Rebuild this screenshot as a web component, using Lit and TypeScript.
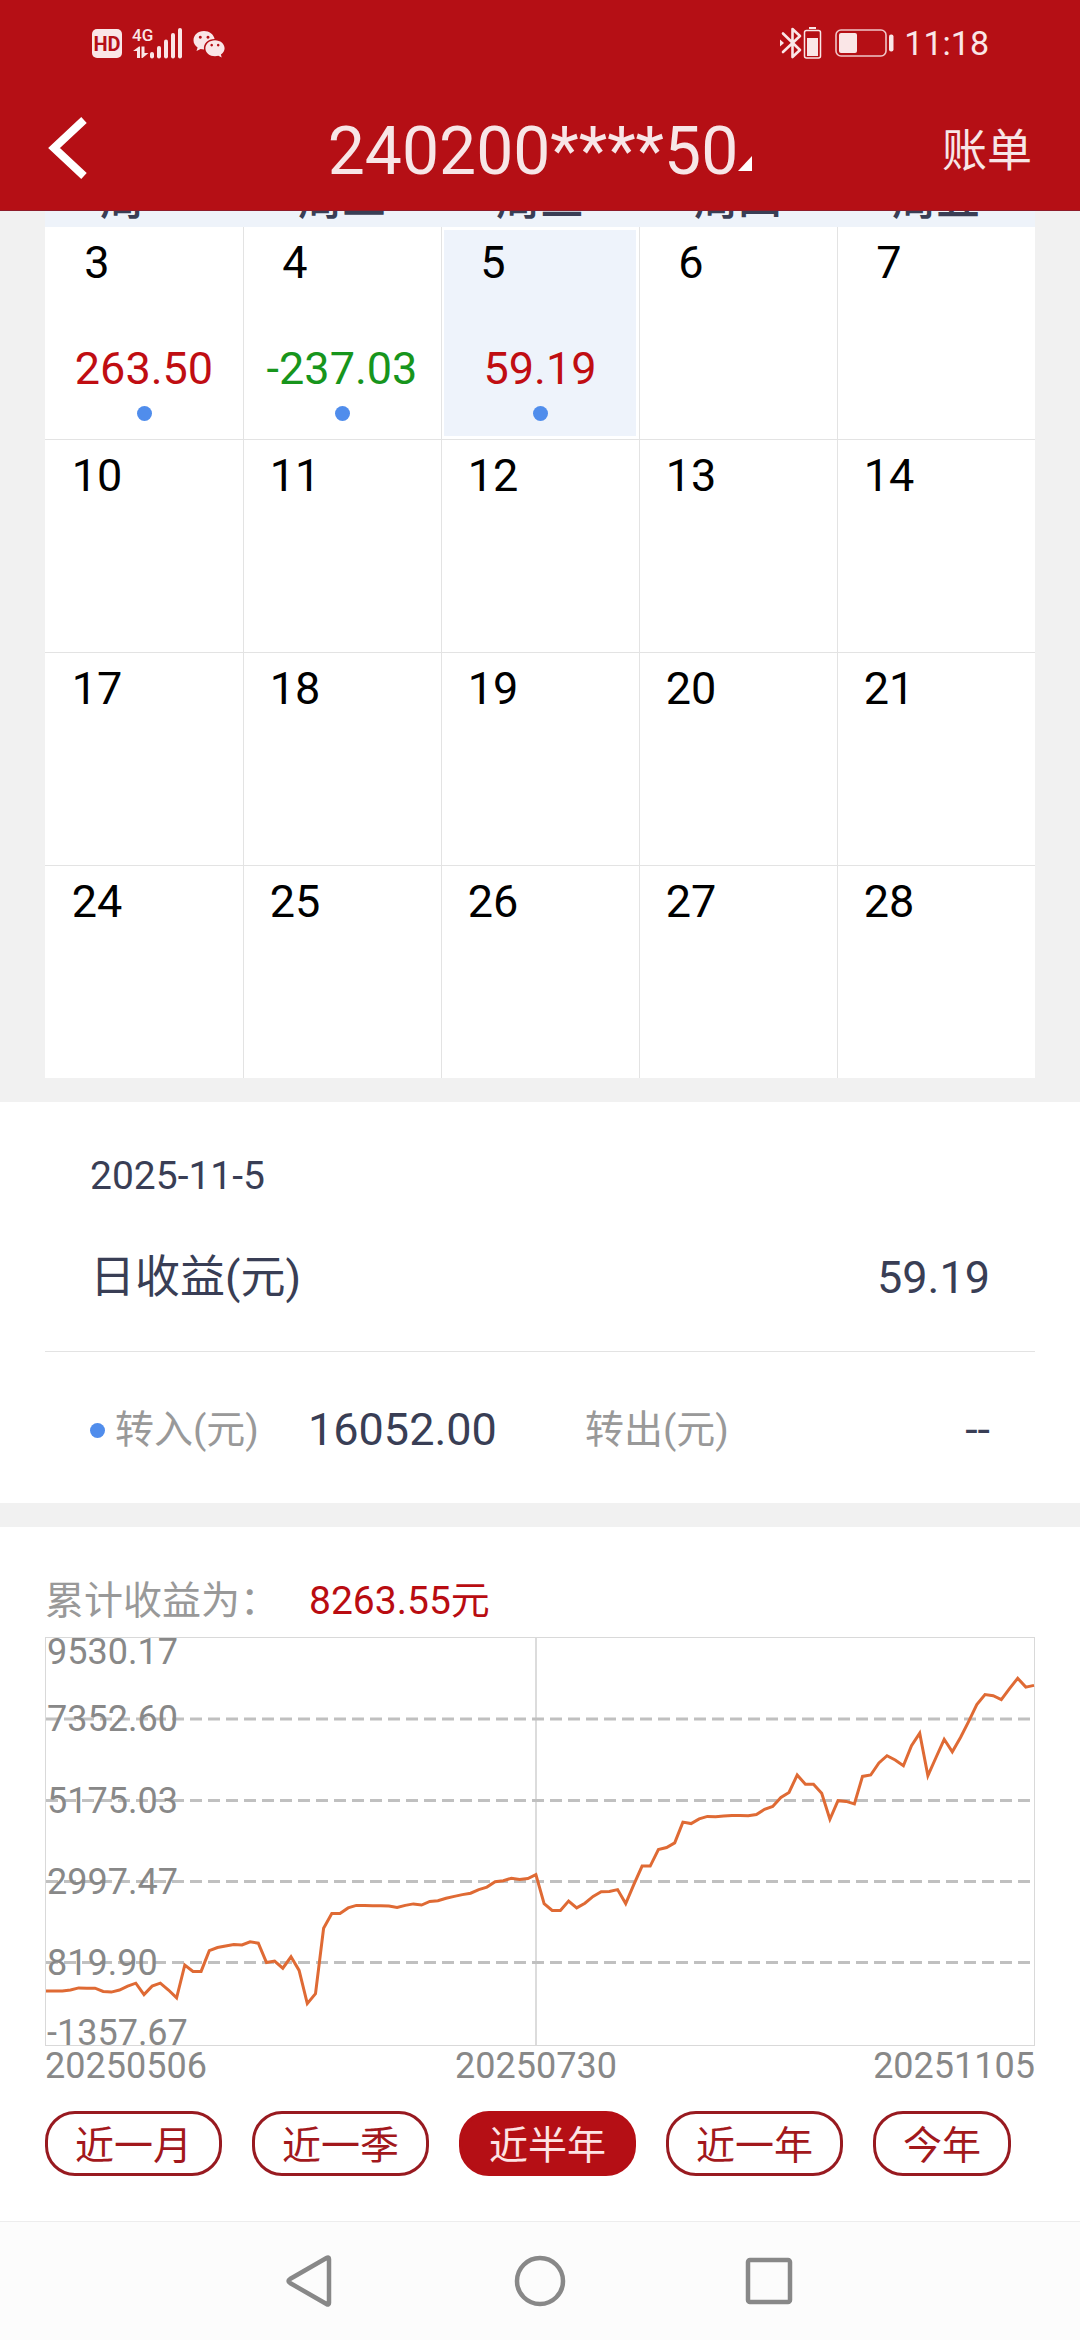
import { LitElement, html, svg, css, nothing } from "lit";
import { customElement, property, state } from "lit/decorators.js";
import { classMap } from "lit/directives/class-map.js";

interface Day {
  day: number;
  amount?: string;
}

const WEEKDAYS = ["周一", "周二", "周三", "周四", "周五"];

const WEEKS: Day[][] = [
  [
    { day: 3, amount: "263.50" },
    { day: 4, amount: "-237.03" },
    { day: 5, amount: "59.19" },
    { day: 6 },
    { day: 7 },
  ],
  [10, 11, 12, 13, 14].map((day) => ({ day })),
  [17, 18, 19, 20, 21].map((day) => ({ day })),
  [24, 25, 26, 27, 28].map((day) => ({ day })),
];

const RANGES = ["近一月", "近一季", "近半年", "近一年", "今年"];

/* Depth of each sample; 2.8 of these make one chart unit. */
const TREND = [
  1263, 1263, 1263, 1260, 1254, 1255, 1255, 1264, 1266, 1260, 1249, 1241, 1273,
  1249, 1241, 1260, 1282, 1190, 1208, 1208, 1150, 1141, 1137, 1133, 1134, 1125,
  1129, 1183, 1179, 1199, 1167, 1205, 1298, 1270, 1087, 1046, 1046, 1030, 1023,
  1023, 1024, 1024, 1025, 1029, 1023, 1019, 1022, 1012, 1010, 1003, 998, 993,
  989, 979, 972, 957, 954, 947, 951, 948, 937, 1018, 1037, 1037, 1011, 1030,
  1017, 998, 985, 984, 979, 1018, 964, 913, 913, 867, 861, 848, 790, 794, 781,
  774, 775, 773, 771, 771, 772, 769, 754, 746, 721, 707, 658, 684, 684, 709,
  782, 730, 732, 739, 662, 658, 624, 604, 616, 632, 576, 541, 660, 609, 558,
  593, 553, 508, 461, 433, 436, 447, 416, 387, 412, 407,
];

const SCALE = [
  { label: "9530.17", baseline: 27 },
  { label: "7352.60", baseline: 94, line: 82 },
  { label: "5175.03", baseline: 176, line: 163.5 },
  { label: "2997.47", baseline: 257, line: 244.5 },
  { label: "819.90", baseline: 338, line: 325.5 },
  { label: "-1357.67", baseline: 408 },
];

const DATES = [
  { label: "20250506", x: 0, anchor: "start" },
  { label: "20250730", x: 491, anchor: "middle" },
  { label: "20251105", x: 990, anchor: "end" },
];

@customElement("status-bar")
class StatusBar extends LitElement {
  static styles = css`
    :host {
      display: flex;
      justify-content: space-between;
      align-items: center;
      height: 85px;
      padding: 0 91px;
      color: #fae6e7;
      font-size: 34px;
      line-height: 40px;
    }
    .group {
      display: flex;
      align-items: center;
      gap: 11px;
    }
    .right {
      gap: 13px;
    }
    .clock {
      display: flex;
      align-items: center;
      gap: 10px;
    }
    svg {
      display: block;
      overflow: visible;
      fill: currentColor;
    }
    .hd {
      font: 700 20px Roboto, sans-serif;
      fill: #b50f15;
    }
    .net {
      font: 500 17px Roboto, sans-serif;
    }
    .line {
      fill: none;
      stroke: currentColor;
    }
  `;

  render() {
    return html`
      <div class="group">
        <svg width="31" height="32" viewBox="0 0 31 32" aria-label="HD">
          <rect x="1" y="2" width="30" height="29" rx="5" />
          <text class="hd" x="16" y="24" text-anchor="middle">HD</text>
        </svg>
        <svg width="49" height="32" viewBox="0 0 49 32" aria-label="4G">
          <text class="net" x="-1" y="14">4G</text>
          <path d="M0 24 L6 19.5 H7 V31 H4 V24 Z" />
          <path d="M8.500 19.500 H11.500 V26 H15.500 L9.500 31 H8.500 Z" />
          <rect x="17" y="25" width="4" height="6.500" rx="2" />
          <rect x="24" y="19" width="4" height="12.500" rx="2" />
          <rect x="31" y="12.500" width="4" height="19" rx="2" />
          <rect x="38" y="6" width="4" height="25.500" rx="2" />
          <rect x="45" y="1" width="4" height="30.500" rx="2" />
        </svg>
        <svg width="32" height="32" viewBox="0 0 32 32" aria-hidden="true">
          <path
            fill-rule="evenodd"
            d="M11 4 C4.800 4 0.500 8.200 0.500 13.200 C0.500 16.200 2 18.700 4.600 20.400 L3.500 24 L7.600 22 C8.700 22.300 9.800 22.400 11 22.400 C10.200 16.500 15 12 21.600 12 C20.600 7.200 16.200 4 11 4 Z M7.300 8.700 A1.500 1.500 0 1 1 7.290 8.700 Z M15 8.700 A1.500 1.500 0 1 1 14.990 8.700 Z"
          />
          <path
            fill-rule="evenodd"
            d="M22 13.200 C16.700 13.200 12.400 16.800 12.400 21.200 C12.400 25.700 16.600 29.200 22 29.200 C23.200 29.200 24.300 29 25.400 28.700 L28.700 30.500 L27.900 27.400 C30.200 25.900 31.600 23.700 31.600 21.200 C31.600 16.800 27.300 13.200 22 13.200 Z M18.700 16.800 A1.300 1.300 0 1 1 18.690 16.800 Z M25.200 16.800 A1.300 1.300 0 1 1 25.190 16.800 Z"
          />
        </svg>
      </div>
      <div class="group right">
        <svg width="43" height="34" viewBox="0 0 43 34" aria-hidden="true">
          <path
            class="line"
            stroke-width="2.600"
            stroke-linejoin="round"
            stroke-linecap="round"
            d="M4 7.500 L21 24 L13.500 31 V3 L21 10 L4 26"
          />
          <path d="M1 13.500 L5 17 L1 20.500 Z" />
          <rect x="30" y="1" width="7" height="2" />
          <rect class="line" x="25.500" y="4.500" width="16" height="27.500" rx="2" stroke-width="1.500" />
          <rect x="28" y="12" width="11" height="18" />
        </svg>
        <div class="clock">
          <svg width="59" height="30" viewBox="0 0 59 30" aria-hidden="true">
            <rect class="line" x="1" y="2" width="50" height="26" rx="5" stroke-width="1.600" opacity="0.850" />
            <rect x="4" y="5" width="18" height="20" rx="2" />
            <rect x="54" y="6.500" width="4.500" height="17" rx="2" />
          </svg>
          <span>11:18</span>
        </div>
      </div>
    `;
  }
}

@customElement("profit-calendar")
class ProfitCalendar extends LitElement {
  @state() private selected = 5;

  static styles = css`
    :host {
      display: block;
      margin: -60px 45px 24px;
    }
    table {
      width: 100%;
      table-layout: fixed;
      border-spacing: 0;
      background: #fff;
    }
    th {
      padding: 22px 0 0;
      background: #eef3fa;
      color: #393e55;
      font-size: 44px;
      line-height: 54px;
      font-weight: 500;
    }
    td {
      padding: 3px;
      border-bottom: 1px solid #e3e3e3;
    }
    td + td {
      padding-left: 2px;
      border-left: 1px solid #e3e3e3;
    }
    tr:last-child td {
      border-bottom: 0;
    }
    .day {
      display: flex;
      flex-direction: column;
      align-items: center;
      width: 100%;
      height: 206px;
      padding: 6px 0 0;
      border: 0;
      background: none;
      color: #000;
      font: inherit;
      font-size: 45px;
      line-height: 54px;
    }
    .picked {
      background: #eef3fb;
    }
    .number {
      align-self: flex-start;
      width: 98px;
    }
    .amount {
      margin-top: 52px;
      color: #c00d12;
    }
    .loss {
      color: #17951c;
    }
    .dot {
      width: 15px;
      height: 15px;
      margin-top: 10px;
      border-radius: 50%;
      background: #508dec;
    }
  `;

  private cell({ day, amount }: Day) {
    return html`<td>
      <button
        class=${classMap({ day: true, picked: day === this.selected })}
        aria-pressed=${day === this.selected}
        @click=${() => (this.selected = day)}
      >
        <span class="number">${day}</span>
        ${amount
          ? html`<span class=${classMap({ amount: true, loss: amount.startsWith("-") })}>${amount}</span>
              <span class="dot"></span>`
          : nothing}
      </button>
    </td>`;
  }

  render() {
    return html`
      <table>
        <thead>
          <tr>
            ${WEEKDAYS.map((name) => html`<th scope="col">${name}</th>`)}
          </tr>
        </thead>
        <tbody>
          ${WEEKS.map((week) => html`<tr>${week.map((day) => this.cell(day))}</tr>`)}
        </tbody>
      </table>
    `;
  }
}

@customElement("day-detail")
class DayDetail extends LitElement {
  static styles = css`
    :host {
      display: block;
      margin-bottom: 24px;
      padding: 0 45px;
      background: #fff;
      color: #393e55;
      font-size: 45px;
      line-height: 54px;
    }
    .summary {
      padding: 50px 45px 46px;
      border-bottom: 1px solid #e3e3e3;
    }
    .date {
      font-size: 39px;
      line-height: 48px;
    }
    .income {
      display: flex;
      justify-content: space-between;
      margin-top: 51px;
    }
    .flows {
      display: grid;
      grid-template-columns: 218px 277px 1fr auto;
      padding: 51px 45px 46px;
    }
    .label {
      display: flex;
      align-items: center;
      gap: 10px;
      color: #999;
      font-size: 39px;
    }
    .dot {
      width: 15px;
      height: 15px;
      border-radius: 50%;
      background: #508dec;
    }
  `;

  render() {
    return html`
      <div class="summary">
        <div class="date">2025-11-5</div>
        <div class="income"><span>日收益(元)</span><span>59.19</span></div>
      </div>
      <div class="flows">
        <span class="label"><span class="dot"></span>转入(元)</span>
        <span>16052.00</span>
        <span class="label">转出(元)</span>
        <span>--</span>
      </div>
    `;
  }
}

@customElement("profit-chart")
class ProfitChart extends LitElement {
  @property({ type: Array }) trend: number[] = TREND;

  static styles = css`
    :host {
      display: block;
    }
    svg {
      display: block;
      width: 100%;
      overflow: visible;
    }
    .frame {
      fill: none;
      stroke: #d9d9d9;
    }
    .middle {
      stroke: #dcdcdc;
      stroke-width: 2;
    }
    .guide {
      stroke: #c0c0c0;
      stroke-width: 3;
      stroke-dasharray: 12 6;
    }
    .curve {
      fill: none;
      stroke: #df6a34;
      stroke-width: 3;
      stroke-linejoin: miter;
    }
    text {
      fill: #888;
      font: 36px Roboto, sans-serif;
    }
  `;

  render() {
    const step = 988 / (this.trend.length - 1);
    const points = this.trend
      .map((depth, i) => `${(1 + i * step).toFixed(1)},${(depth / 2.8 - 97).toFixed(1)}`)
      .join(" ");
    return html`
      <svg viewBox="0 0 990 449" role="img" aria-label="累计收益">
        <rect class="frame" x="0.500" y="0.500" width="989" height="408" />
        <line class="middle" x1="491" y1="1" x2="491" y2="408" />
        ${SCALE.map(
          ({ line }) => (line ? svg`<line class="guide" x1="1" y1=${line} x2="989" y2=${line} />` : nothing),
        )}
        ${SCALE.map(({ label, baseline }) => svg`<text x="2" y=${baseline}>${label}</text>`)}
        ${DATES.map(
          ({ label, x, anchor }) => svg`<text x=${x} y="441" text-anchor=${anchor}>${label}</text>`,
        )}
        <polyline class="curve" points=${points} />
      </svg>
    `;
  }
}

@customElement("app-root")
class AppRoot extends LitElement {
  @state() private range = "近半年";

  static styles = css`
    :host {
      display: flex;
      flex-direction: column;
      min-height: 100vh;
      background: #f1f1f1;
      font-family: Roboto, "Noto Sans CJK SC", sans-serif;
      overflow: hidden;
    }
    button {
      margin: 0;
      padding: 0;
      border: 0;
      background: none;
      color: inherit;
      font: inherit;
    }
    svg {
      display: block;
    }
    .top {
      position: relative;
      z-index: 1;
      background: #b50f15;
      border-bottom: 1px solid #8e1c2a;
      color: #f7e6e7;
    }
    .bar {
      display: grid;
      grid-template-columns: 1fr auto 1fr;
      align-items: center;
      height: 125px;
      padding: 0 48px;
    }
    .back {
      justify-self: start;
    }
    .account,
    .bill {
      padding-top: 8px;
    }
    .account {
      display: flex;
      align-items: baseline;
      font-size: 66px;
      line-height: 78px;
    }
    .bill {
      justify-self: end;
      font-size: 45px;
      line-height: 54px;
    }
    .profit {
      flex: 1;
      padding: 50px 45px 45px;
      background: #fff;
    }
    .total {
      display: grid;
      grid-template-columns: 264px 1fr;
      margin-bottom: 12px;
      color: #999;
      font-size: 39px;
      line-height: 48px;
    }
    .sum {
      color: #b90c11;
    }
    .ranges {
      display: flex;
      flex-wrap: wrap;
      gap: 30px;
      margin-top: 25px;
    }
    .range {
      padding: 8px 27px 3px;
      border: 3px solid #981a20;
      border-radius: 30px;
      color: #a2181c;
      font-size: 39px;
      line-height: 48px;
    }
    .active {
      border-color: #b50f15;
      background: #b50f15;
      color: #fde3e4;
    }
    .system {
      display: grid;
      grid-template-columns: repeat(3, 230px);
      justify-content: center;
      align-items: center;
      justify-items: center;
      height: 118px;
      border-top: 1px solid #ededed;
      background: #fcfcfc;
    }
    .system svg {
      fill: none;
      stroke: #888;
      stroke-width: 4.5;
      stroke-linejoin: round;
    }
  `;

  render() {
    return html`
      <header class="top">
        <status-bar></status-bar>
        <div class="bar">
          <button class="back" aria-label="返回">
            <svg width="40" height="64" viewBox="0 0 40 64">
              <path d="M36 4 L6 32 L36 60" fill="none" stroke="#fff" stroke-width="8" />
            </svg>
          </button>
          <button class="account">
            240200****50
            <svg width="14" height="18" viewBox="0 0 14 18"><path d="M14 0 V15 H0 Z" fill="#fff" /></svg>
          </button>
          <button class="bill">账单</button>
        </div>
      </header>
      <profit-calendar></profit-calendar>
      <day-detail></day-detail>
      <section class="profit">
        <div class="total"><span>累计收益为：</span><span class="sum">8263.55元</span></div>
        <profit-chart></profit-chart>
        <div class="ranges">
          ${RANGES.map(
            (name) => html`<button
              class=${classMap({ range: true, active: name === this.range })}
              aria-pressed=${name === this.range}
              @click=${() => (this.range = name)}
            >
              ${name}
            </button>`,
          )}
        </div>
      </section>
      <nav class="system">
        <button aria-label="后退">
          <svg width="54" height="54" viewBox="0 0 54 54"><path d="M46 5 V49 Q46 51.500 43.500 50 L7 29 Q4 27 7 25 L43.500 4 Q46 2.500 46 5 Z" /></svg>
        </button>
        <button aria-label="主页">
          <svg width="54" height="54" viewBox="0 0 54 54"><circle cx="27" cy="27" r="23" /></svg>
        </button>
        <button aria-label="最近任务">
          <svg width="54" height="54" viewBox="0 0 54 54"><rect x="5" y="6" width="42" height="42" rx="2" /></svg>
        </button>
      </nav>
    `;
  }
}
